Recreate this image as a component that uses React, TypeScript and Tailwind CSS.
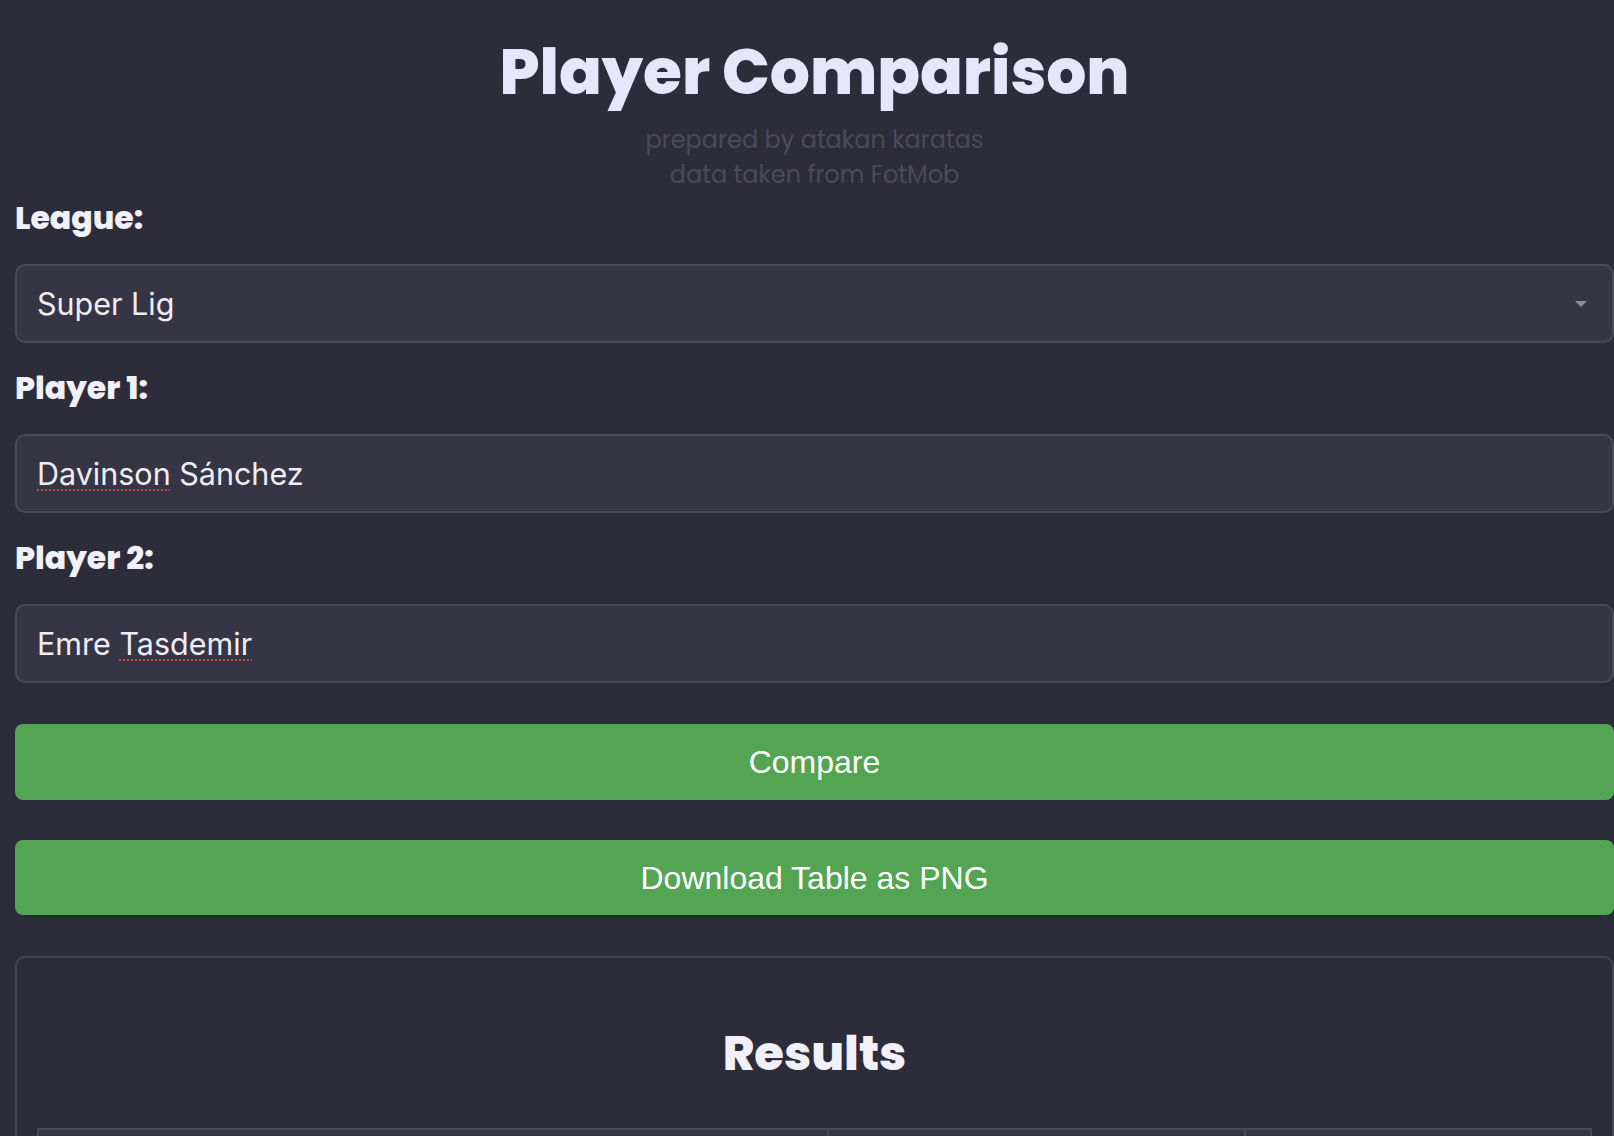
import React, { useState } from "react";

const heading = { fontFamily: "Poppins, Inter, 'Noto Sans', sans-serif" };
const body = { fontFamily: "Inter, 'Noto Sans', sans-serif" };
const system = { fontFamily: "'Liberation Sans', Arial, sans-serif" };

interface FieldProps {
  label: string;
  children: React.ReactNode;
}

function Field({ label, children }: FieldProps) {
  return (
    <div className="mt-[27px] first:mt-0">
      <div
        style={heading}
        className="text-[31.5px] leading-[36px] font-extrabold text-[#f1f0f6]"
      >
        {label}
      </div>
      <div className="mt-[28px]">{children}</div>
    </div>
  );
}

// fake text box so the spell-check squiggles can be shown
function TextBox({ words }: { words: { text: string; flagged?: boolean }[] }) {
  return (
    <div
      role="textbox"
      style={body}
      className="h-[79px] w-full flex items-center rounded-[10px] border-2 border-[#4a495a] bg-[#363545] pl-[20px] text-[30.5px] text-[#eeeef2]"
    >
      <span className="whitespace-pre">
        {words.map((w, i) => (
          <React.Fragment key={i}>
            {i > 0 && " "}
            <span
              className={
                w.flagged
                  ? "underline decoration-dotted decoration-[#d2473c] decoration-2 underline-offset-[5px]"
                  : ""
              }
            >
              {w.text}
            </span>
          </React.Fragment>
        ))}
      </span>
    </div>
  );
}

export default function App() {
  const [league] = useState("Super Lig");

  return (
    <div className="min-h-screen w-full overflow-hidden bg-[#2d2c3a] pl-[15px]">
      <div className="w-[1599px]">
        <h1
          style={heading}
          className="pt-[40px] text-center text-[63px] leading-[64px] font-extrabold text-[#e6e6fa]"
        >
          Player Comparison
        </h1>
        <div
          style={heading}
          className="mt-[18px] text-center text-[24px] leading-[35px] text-[#4b4a5b]"
        >
          <div>prepared by atakan karatas</div>
          <div>data taken from FotMob</div>
        </div>

        <div className="mt-[8px]">
          <Field label="League:">
            <div
              style={body}
              className="h-[79px] w-full flex items-center justify-between rounded-[10px] border-2 border-[#4a495a] bg-[#363545] pl-[20px] pr-[25px] text-[30.5px] text-[#eeeef2]"
            >
              <span>{league}</span>
              <svg width="12" height="6" viewBox="0 0 12 6">
                <path d="M0 0 L12 0 L6 6 Z" fill="#8b8b93" />
              </svg>
            </div>
          </Field>
          <Field label="Player 1:">
            <TextBox
              words={[{ text: "Davinson", flagged: true }, { text: "Sánchez" }]}
            />
          </Field>
          <Field label="Player 2:">
            <TextBox
              words={[{ text: "Emre" }, { text: "Tasdemir", flagged: true }]}
            />
          </Field>
        </div>

        <button
          style={system}
          className="mt-[41px] h-[76px] w-full rounded-[8px] bg-[#53a553] text-[32px] text-white"
        >
          Compare
        </button>
        <button
          style={system}
          className="mt-[40px] h-[75px] w-full rounded-[8px] bg-[#53a553] text-[32px] text-white"
        >
          Download Table as PNG
        </button>

        <div className="mt-[41px] rounded-[10px] border-2 border-[#454456] px-[20px] pb-[20px]">
          <h2
            style={heading}
            className="mt-[72px] text-center text-[48px] leading-[48px] font-extrabold text-[#f1f0f6]"
          >
            Results
          </h2>
          <table className="mt-[50px] w-full border-collapse" style={body}>
            <thead>
              <tr className="bg-[#363545] text-[28px] text-[#f0f0f3]">
                <th className="w-[790px] border-2 border-[#4a495a] px-4 py-6 text-left">
                  Statistic
                </th>
                <th className="w-[417px] border-2 border-[#4a495a] px-4 py-6">
                  Davinson Sánchez
                </th>
                <th className="border-2 border-[#4a495a] px-4 py-6">
                  Emre Tasdemir
                </th>
              </tr>
            </thead>
          </table>
        </div>
      </div>
    </div>
  );
}
